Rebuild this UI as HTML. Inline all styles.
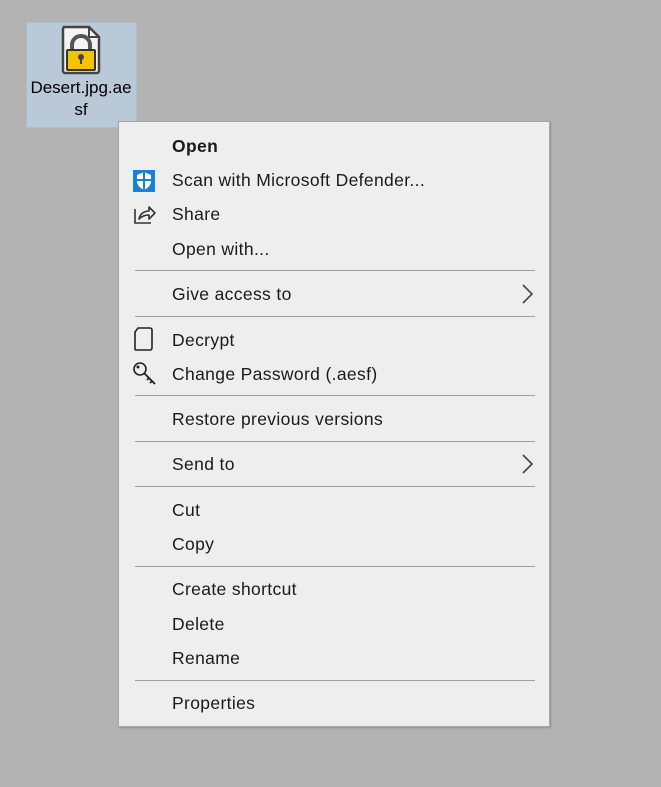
<!DOCTYPE html>
<html><head><style>
body{margin:0;width:661px;height:787px;background:#b3b3b3;position:relative;overflow:hidden;font-family:"Liberation Sans",sans-serif;}
.sel{position:absolute;left:26px;top:22px;width:111px;height:106px;background:#b9c9d8;border:1px solid #a9bed2;box-sizing:border-box;}
.lbl{position:absolute;left:22px;top:77px;width:118px;text-align:center;font-size:17px;line-height:22px;color:#000;}
.menu{position:absolute;left:118px;top:121px;width:432px;height:606px;background:#eeeeee;border:1px solid #a6a6a6;box-sizing:border-box;box-shadow:1px 1px 2px rgba(0,0,0,.2);}
.it{position:absolute;left:53px;font-size:17.5px;letter-spacing:0.35px;color:#1a1a1a;line-height:20px;}
.sep{position:absolute;left:16px;width:400px;height:1px;background:#a0a0a0;}
.arr{position:absolute;left:402px;}
.ic{position:absolute;left:13px;}
</style></head><body>
<div class="sel"></div>
<svg style="position:absolute;left:58px;top:24px" width="46" height="52" viewBox="0 0 46 52">
<path d="M5 3h26l10 10v34a2 2 0 0 1-2 2H7a2 2 0 0 1-2-2V5a2 2 0 0 1 2-2z" fill="#f4f4f4" stroke="#444" stroke-width="2.5"/>
<path d="M31 3v10h10" fill="none" stroke="#444" stroke-width="2"/>
<path d="M14 28v-7a9 9 0 0 1 18 0v7" fill="none" stroke="#555" stroke-width="4"/>
<rect x="9" y="26" width="28" height="20" rx="1" fill="#f5c400" stroke="#333" stroke-width="2"/>
<circle cx="23" cy="33" r="3" fill="#444"/><rect x="22" y="34" width="2" height="6" fill="#444"/>
</svg>
<div class="lbl">Desert.jpg.ae<br>sf</div>
<div class="menu">
<div class="it" style="top:14px;font-weight:bold">Open</div>
<svg class="ic" style="top:47px" width="24" height="24" viewBox="0 0 24 24"><rect x="1" y="1" width="22" height="22" fill="#1a7fd6"/><path d="M12 3l7 3v6c0 4-3 7-7 9-4-2-7-5-7-9V6z" fill="#fff"/><path d="M12 3v18M5 11h14" stroke="#1a7fd6" stroke-width="2"/></svg>
<div class="it" style="top:48px">Scan with Microsoft Defender...</div>
<svg class="ic" style="top:81px" width="24" height="22" viewBox="0 0 24 22"><path d="M3 6v14h16" fill="none" stroke="#333" stroke-width="1.6"/><path d="M7 16c1-5 5-8 10-8V4l6 6-6 6v-4c-4 0-7 1-10 4z" fill="none" stroke="#333" stroke-width="1.6" stroke-linejoin="round"/></svg>
<div class="it" style="top:82px">Share</div>
<div class="it" style="top:117px">Open with...</div>
<div class="sep" style="top:148px"></div>
<div class="it" style="top:162px">Give access to</div>
<svg class="arr" style="top:161px" width="14" height="22"><path d="M2 2l9 9-9 9" fill="none" stroke="#444" stroke-width="1.6"/></svg>
<div class="sep" style="top:194px"></div>
<svg class="ic" style="top:204px" width="24" height="26" viewBox="0 0 24 26"><path d="M6 2h12a2 2 0 0 1 2 2v18a2 2 0 0 1-2 2H4a1 1 0 0 1-1-1V6z" fill="none" stroke="#222" stroke-width="1.6"/></svg>
<div class="it" style="top:208px">Decrypt</div>
<svg class="ic" style="top:239px" width="26" height="26" viewBox="0 0 26 26"><circle cx="8" cy="8" r="6" fill="none" stroke="#222" stroke-width="1.6"/><circle cx="6" cy="6" r="1.5" fill="#222"/><path d="M12 12l11 11M17 17l-2 2M20 20l-2 2" stroke="#222" stroke-width="1.8" fill="none"/></svg>
<div class="it" style="top:242px">Change Password (.aesf)</div>
<div class="sep" style="top:273px"></div>
<div class="it" style="top:287px">Restore previous versions</div>
<div class="sep" style="top:319px"></div>
<div class="it" style="top:332px">Send to</div>
<svg class="arr" style="top:331px" width="14" height="22"><path d="M2 2l9 9-9 9" fill="none" stroke="#444" stroke-width="1.6"/></svg>
<div class="sep" style="top:364px"></div>
<div class="it" style="top:378px">Cut</div>
<div class="it" style="top:412px">Copy</div>
<div class="sep" style="top:444px"></div>
<div class="it" style="top:457px">Create shortcut</div>
<div class="it" style="top:492px">Delete</div>
<div class="it" style="top:526px">Rename</div>
<div class="sep" style="top:558px"></div>
<div class="it" style="top:571px">Properties</div>
</div>
</body></html>
